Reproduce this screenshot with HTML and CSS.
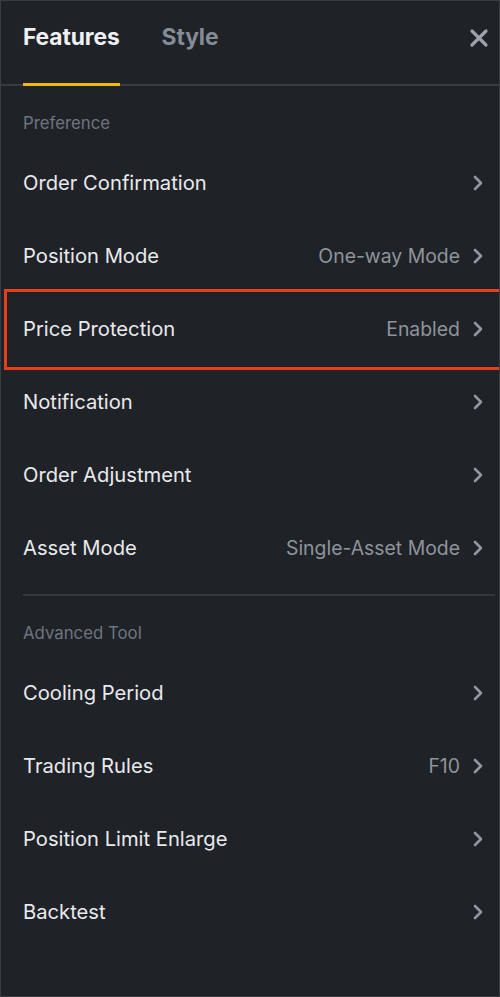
FILE: index.html
```html
<!DOCTYPE html>
<html>
<head>
<meta charset="utf-8">
<link rel="stylesheet" href="styles.css">
</head>
<body>
<div class="panel">
  <header class="header">
    <nav class="tabs">
      <span class="tab active">Features</span>
      <span class="tab">Style</span>
    </nav>
    <svg class="close" viewBox="0 0 20 20" width="20" height="20"><path d="M3 3 L17 17 M17 3 L3 17" stroke="currentColor" stroke-width="3.2" stroke-linecap="round"/></svg>
  </header>

  <section class="section">
    <div class="label">Preference</div>
    <div class="row"><span class="name">Order Confirmation</span><span class="right"><svg class="chev" viewBox="0 0 10 16"><path d="M2 2 L8 8 L2 14" fill="none" stroke="currentColor" stroke-width="2.6" stroke-linecap="round" stroke-linejoin="round"/></svg></span></div>
    <div class="row"><span class="name">Position Mode</span><span class="right"><span class="value">One-way Mode</span><svg class="chev" viewBox="0 0 10 16"><path d="M2 2 L8 8 L2 14" fill="none" stroke="currentColor" stroke-width="2.6" stroke-linecap="round" stroke-linejoin="round"/></svg></span></div>
    <div class="row highlight"><span class="name">Price Protection</span><span class="right"><span class="value">Enabled</span><svg class="chev" viewBox="0 0 10 16"><path d="M2 2 L8 8 L2 14" fill="none" stroke="currentColor" stroke-width="2.6" stroke-linecap="round" stroke-linejoin="round"/></svg></span></div>
    <div class="row"><span class="name">Notification</span><span class="right"><svg class="chev" viewBox="0 0 10 16"><path d="M2 2 L8 8 L2 14" fill="none" stroke="currentColor" stroke-width="2.6" stroke-linecap="round" stroke-linejoin="round"/></svg></span></div>
    <div class="row"><span class="name">Order Adjustment</span><span class="right"><svg class="chev" viewBox="0 0 10 16"><path d="M2 2 L8 8 L2 14" fill="none" stroke="currentColor" stroke-width="2.6" stroke-linecap="round" stroke-linejoin="round"/></svg></span></div>
    <div class="row"><span class="name">Asset Mode</span><span class="right"><span class="value">Single-Asset Mode</span><svg class="chev" viewBox="0 0 10 16"><path d="M2 2 L8 8 L2 14" fill="none" stroke="currentColor" stroke-width="2.6" stroke-linecap="round" stroke-linejoin="round"/></svg></span></div>
  </section>

  <div class="divider"></div>

  <section class="section">
    <div class="label">Advanced Tool</div>
    <div class="row"><span class="name">Cooling Period</span><span class="right"><svg class="chev" viewBox="0 0 10 16"><path d="M2 2 L8 8 L2 14" fill="none" stroke="currentColor" stroke-width="2.6" stroke-linecap="round" stroke-linejoin="round"/></svg></span></div>
    <div class="row"><span class="name">Trading Rules</span><span class="right"><span class="value">F10</span><svg class="chev" viewBox="0 0 10 16"><path d="M2 2 L8 8 L2 14" fill="none" stroke="currentColor" stroke-width="2.6" stroke-linecap="round" stroke-linejoin="round"/></svg></span></div>
    <div class="row"><span class="name">Position Limit Enlarge</span><span class="right"><svg class="chev" viewBox="0 0 10 16"><path d="M2 2 L8 8 L2 14" fill="none" stroke="currentColor" stroke-width="2.6" stroke-linecap="round" stroke-linejoin="round"/></svg></span></div>
    <div class="row"><span class="name">Backtest</span><span class="right"><svg class="chev" viewBox="0 0 10 16"><path d="M2 2 L8 8 L2 14" fill="none" stroke="currentColor" stroke-width="2.6" stroke-linecap="round" stroke-linejoin="round"/></svg></span></div>
  </section>
</div>
</body>
</html>
```

FILE: styles.css
```css
* { box-sizing: border-box; }
html, body { margin: 0; padding: 0; background: #1f2227; }
body { font-family: "Inter", "Noto Sans", sans-serif; }

.panel {
  width: 500px;
  height: 997px;
  background: #1f2227;
  border: 1px solid #3a3d44;
  overflow: hidden;
  position: relative;
}

.header {
  height: 85px;
  display: flex;
  align-items: flex-start;
  justify-content: space-between;
  padding: 0 10px 0 22px;
  border-bottom: 2px solid #363a41;
}

.tabs { display: flex; gap: 42px; height: 100%; }
.tab {
  font-size: 22.8px;
  font-weight: 700;
  color: #848c97;
  padding-top: 22px;
  height: 100%;
  letter-spacing: -0.1px;
}
.tab.active {
  color: #eef0f3;
  border-bottom: 3px solid #f0b90b;
  margin-bottom: -2px;
  height: calc(100% + 2px);
}

.close { color: #9ca2ab; margin-top: 27px; }

.section { display: flex; flex-direction: column; }

.label {
  font-size: 16.8px;
  color: #6e7580;
  line-height: 20px;
  padding: 27px 22px 13px;
}

.row {
  height: 73px;
  display: flex;
  align-items: center;
  justify-content: space-between;
  padding: 0 16px 0 22px;
  position: relative;
}
.name { font-size: 20.2px; color: #e8eaed; }
.right { display: flex; align-items: center; gap: 13px; }
.value { font-size: 19.4px; color: #8e949c; }
.chev { width: 10px; height: 16px; color: #9097a0; }

.highlight::after {
  content: "";
  position: absolute;
  left: 3px;
  top: -3px;
  width: 520px;
  height: 75px;
  border: 3px solid #e5401d;
}

.divider {
  height: 2px;
  background: #34383f;
  margin: 10px 4px 0 22px;
}
```
